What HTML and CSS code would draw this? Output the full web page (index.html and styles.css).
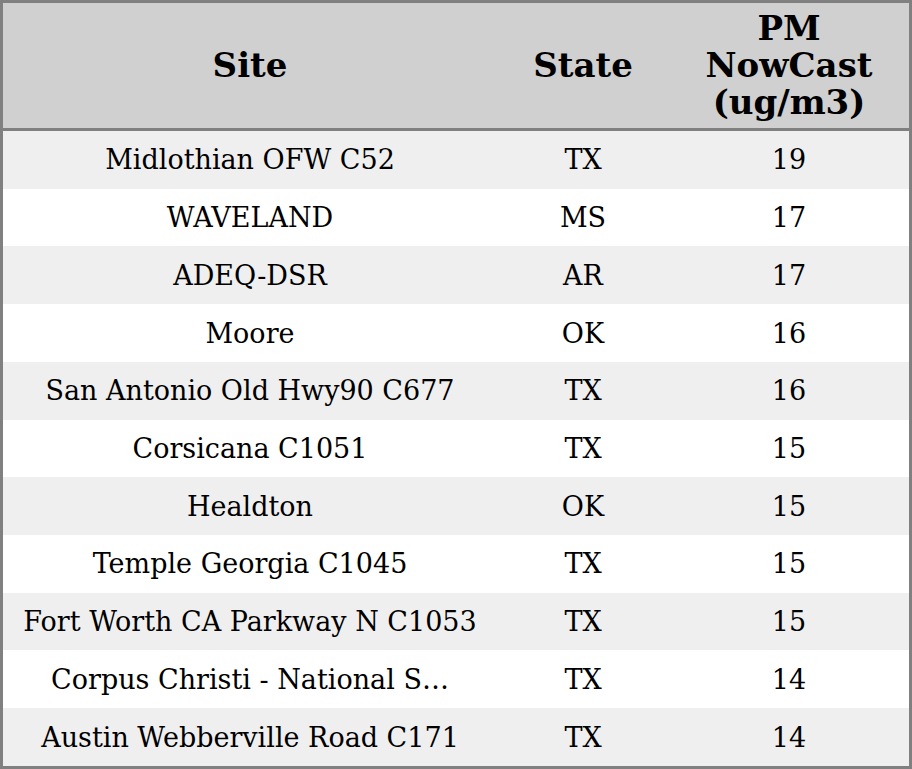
FILE: index.html
```html
<!DOCTYPE html>
<html>
<head>
<meta charset="utf-8">
<link rel="stylesheet" href="styles.css">
</head>
<body>
<table class="aq-table">
  <colgroup>
    <col class="col-site">
    <col class="col-state">
    <col class="col-pm">
  </colgroup>
  <thead>
    <tr>
      <th>Site</th>
      <th>State</th>
      <th>PM NowCast (ug/m3)</th>
    </tr>
  </thead>
  <tbody>
    <tr><td>Midlothian OFW C52</td><td>TX</td><td>19</td></tr>
    <tr><td>WAVELAND</td><td>MS</td><td>17</td></tr>
    <tr><td>ADEQ-DSR</td><td>AR</td><td>17</td></tr>
    <tr><td>Moore</td><td>OK</td><td>16</td></tr>
    <tr><td>San Antonio Old Hwy90 C677</td><td>TX</td><td>16</td></tr>
    <tr><td>Corsicana C1051</td><td>TX</td><td>15</td></tr>
    <tr><td>Healdton</td><td>OK</td><td>15</td></tr>
    <tr><td>Temple Georgia C1045</td><td>TX</td><td>15</td></tr>
    <tr><td>Fort Worth CA Parkway N C1053</td><td>TX</td><td>15</td></tr>
    <tr><td>Corpus Christi - National S…</td><td>TX</td><td>14</td></tr>
    <tr><td>Austin Webberville Road C171</td><td>TX</td><td>14</td></tr>
  </tbody>
</table>
</body>
</html>
```

FILE: styles.css
```css
html, body {
  margin: 0;
  padding: 0;
  background: #ffffff;
}

.aq-table {
  width: 912px;
  border-collapse: separate;
  border-spacing: 0;
  border: 3px solid #808080;
  table-layout: fixed;
  font-family: "DejaVu Serif", serif;
  color: #000000;
}

.col-site { width: 494px; }
.col-state { width: 172px; }
.col-pm { width: 240px; }

.aq-table th {
  background: #d0d0d0;
  font-size: 34px;
  font-weight: bold;
  line-height: 37px;
  height: 128px;
  padding: 0 12px;
  text-align: center;
  vertical-align: middle;
  border-bottom: 3px solid #808080;
  box-sizing: border-box;
}

.aq-table td {
  font-size: 27px;
  line-height: normal;
  height: 57.73px;
  padding: 0;
  text-align: center;
  vertical-align: middle;
  white-space: nowrap;
  box-sizing: border-box;
}

.aq-table tbody tr:nth-child(odd) td {
  background: #efefef;
}

.aq-table tbody tr:nth-child(even) td {
  background: #ffffff;
}
```
